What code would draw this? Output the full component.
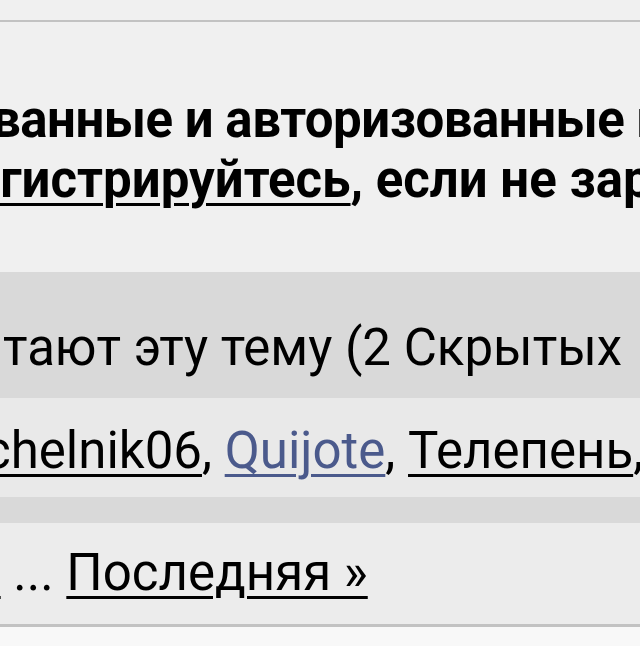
export default function App() {
  return (
    <div className="h-[646px] w-[640px] overflow-hidden bg-[#f0f0f0] text-[51px] leading-[60px] text-black font-['Roboto','Noto_Sans',sans-serif]">
      <div className="h-[20px]" />
      <div className="h-[2px] bg-[#c2c2c2]" />

      {/* guest notice */}
      <div className="pt-[68px] pb-[62px] font-bold whitespace-nowrap">
        <div className="-ml-[8px] tracking-[-0.5px]">ванные и авторизованные пользователи</div>
        <div className="-ml-[56px]">
          <span className="underline decoration-[3px] underline-offset-[6px]">регистрируйтесь</span>, если не зарегистрированы
        </div>
      </div>

      {/* who is reading */}
      <div className="bg-[#d9d9d9] pt-[46px] pb-[20px] pl-[3px] whitespace-nowrap">
        тают эту тему (2 Скрытых
      </div>
      <div className="bg-[#e9e9e9] pt-[23px] pb-[16px] -ml-[16px] whitespace-nowrap">
        <span className="underline decoration-[3px] underline-offset-[6px]">chelnik06</span>,{" "}
        <span className="text-[#4b5a8c] underline decoration-[3px] underline-offset-[6px]">Quijote</span>,{" "}
        <span className="underline decoration-[3px] underline-offset-[6px]">Телепень</span>,
      </div>
      <div className="h-[26px] bg-[#d9d9d9]" />

      {/* pagination */}
      <div className="bg-[#ececec] pt-[20px] pb-[21px] -ml-[28px] whitespace-nowrap">
        <span className="underline decoration-[3px] underline-offset-[6px]">2</span> ...{" "}
        <span className="underline decoration-[3px] underline-offset-[6px]">Последняя »</span>
      </div>
      <div className="h-[3px] bg-[#c2c2c2]" />
      <div className="h-[40px] bg-[#f8f8f8]" />
    </div>
  );
}
